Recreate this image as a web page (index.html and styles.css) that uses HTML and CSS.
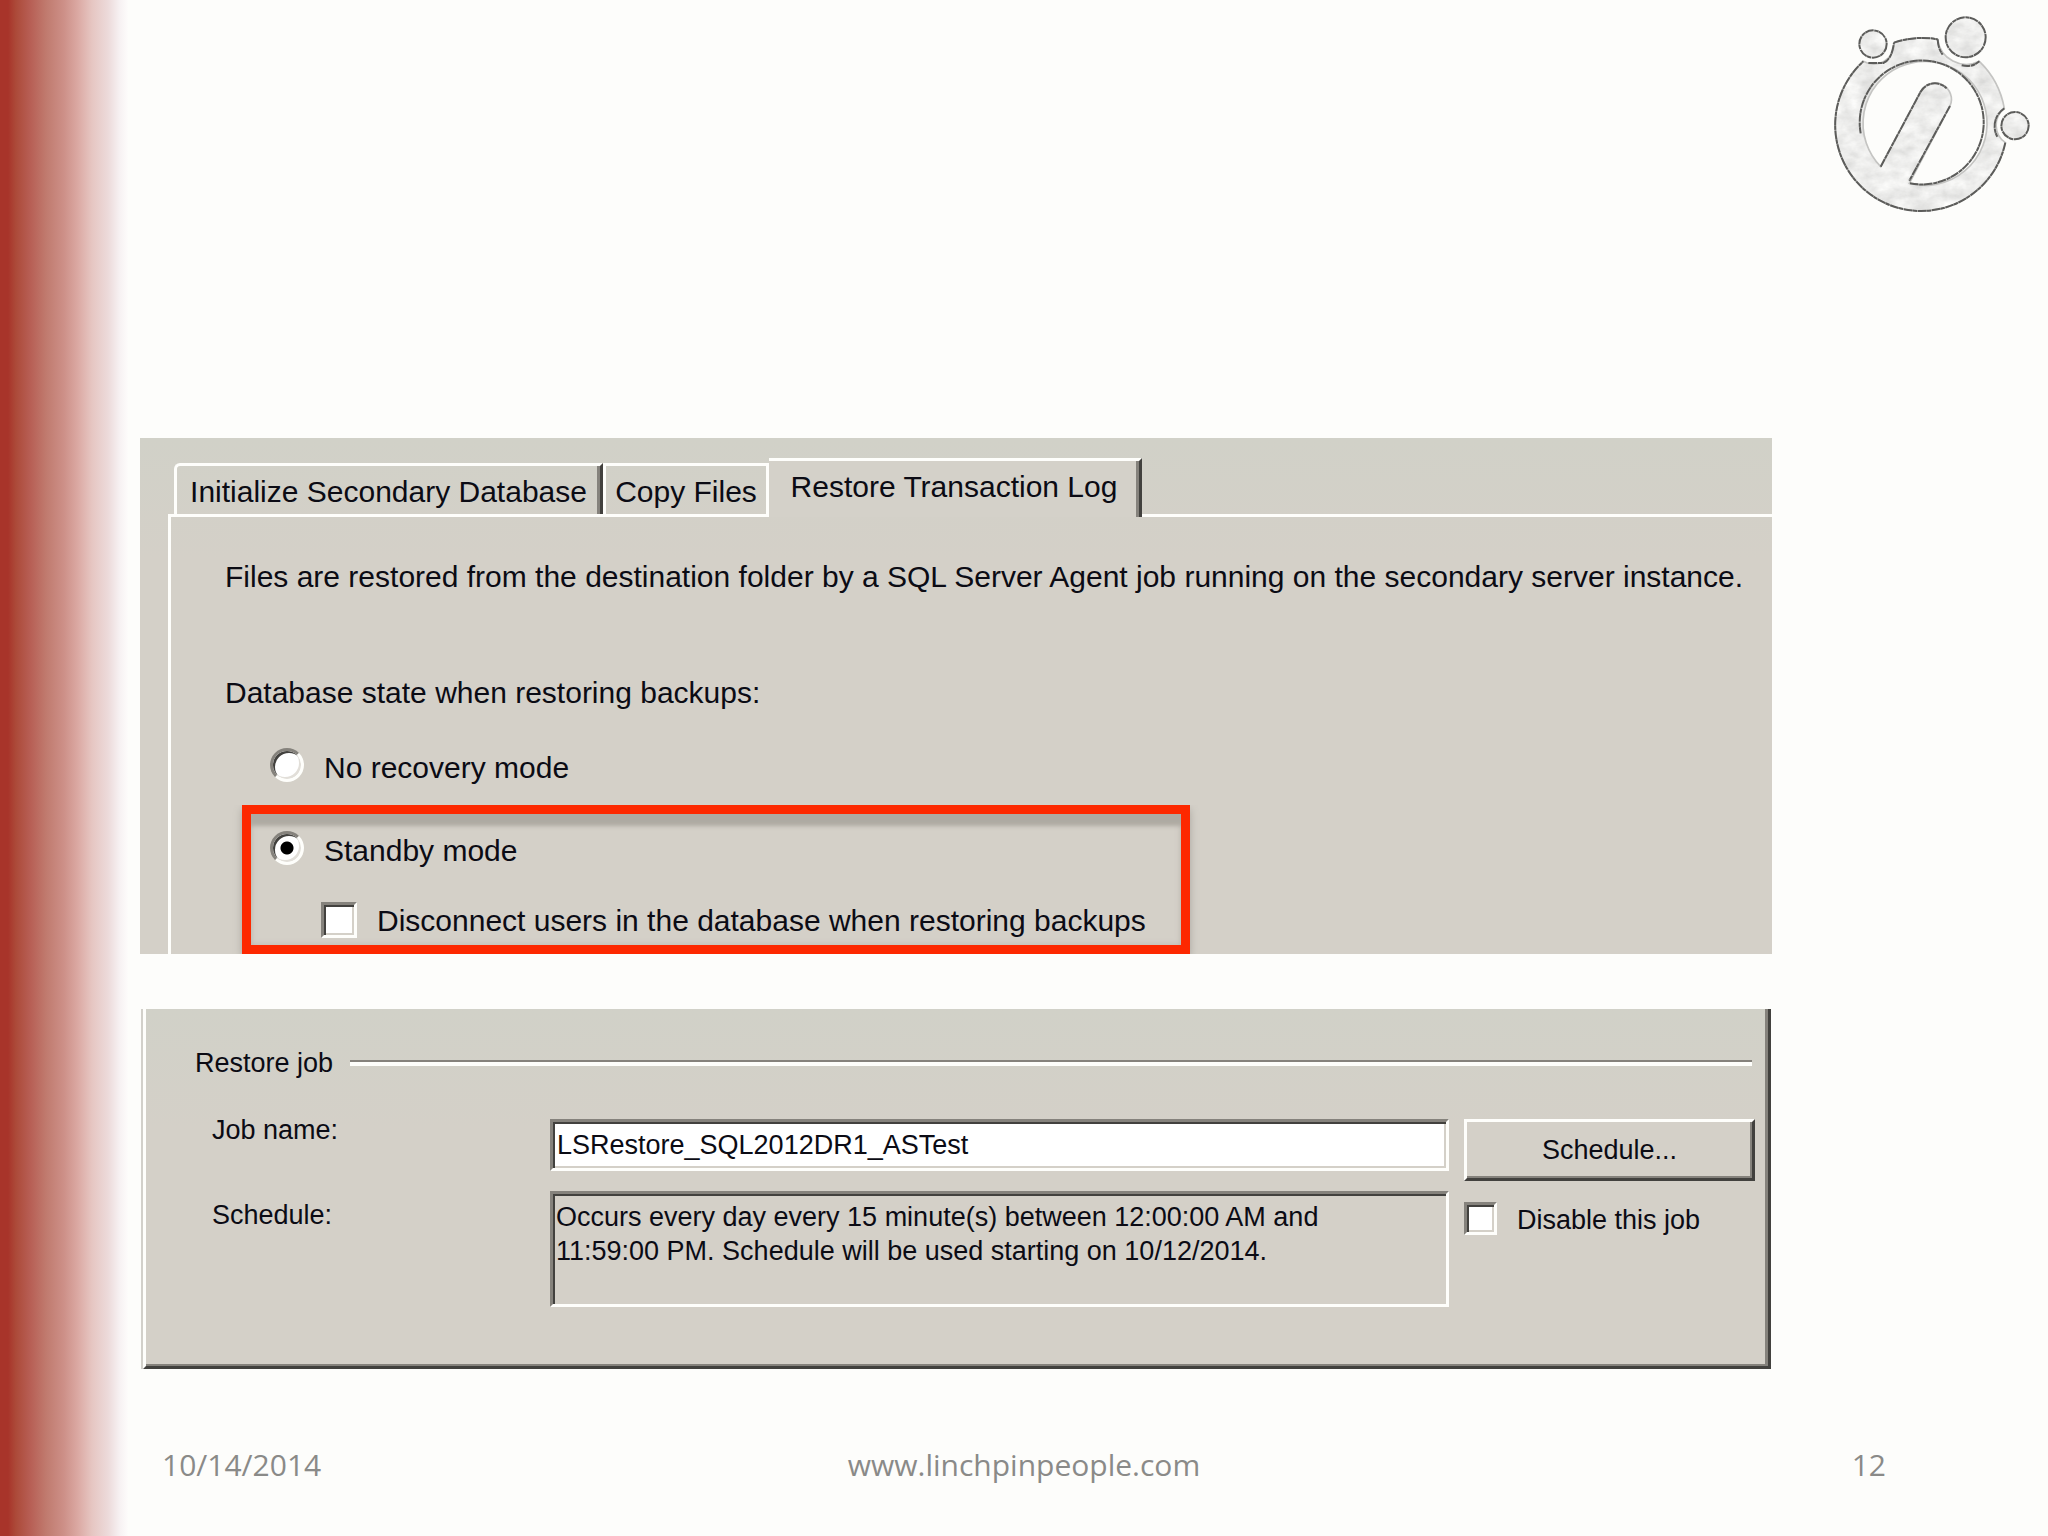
FILE: index.html
```html
<!DOCTYPE html>
<html lang="en">
<head>
<meta charset="utf-8">
<title>Restore Transaction Log</title>
<link rel="stylesheet" href="styles.css">
</head>
<body>
<div class="slide">
  <header class="slide-header">
    <svg class="logo" viewBox="0 0 714 690" role="img" aria-label="Linchpin People">
      <defs>
        <filter id="paper" x="0" y="0" width="100%" height="100%" color-interpolation-filters="sRGB">
          <feTurbulence type="fractalNoise" baseFrequency="0.02 0.03" numOctaves="4" seed="4" result="noise"/>
          <feColorMatrix in="noise" type="matrix" values="0.18 0 0 0 0.84  0.18 0 0 0 0.84  0.18 0 0 0 0.835  0 0 0 0 1"/>
          <feComposite in2="SourceGraphic" operator="in"/>
        </filter>
      </defs>
      <g filter="url(#paper)">
        <path fill-rule="evenodd" d="M252 128A258 258 0 0 1 383 118A87 87 0 0 0 508 184A258 258 0 0 1 583 325A64 64 0 0 0 586 428A258 258 0 1 1 160 184A61 61 0 0 0 252 128ZM212 500A186 186 0 1 1 298 550L420 318A49 49 0 0 0 332 275Z"/>
        <circle cx="189" cy="132" r="41"/><circle cx="467" cy="112" r="60"/><circle cx="615" cy="377" r="41"/>
      </g>
      <g class="logo-soft">
        <path d="M252 128A258 258 0 0 1 383 118A87 87 0 0 0 508 184A258 258 0 0 1 583 325A64 64 0 0 0 586 428A258 258 0 1 1 160 184A61 61 0 0 0 252 128Z"/>
        <path d="M212 500A186 186 0 1 1 298 550L420 318A49 49 0 0 0 332 275Z"/>
      </g>
      <g class="logo-ink">
        <path d="M252 128A258 258 0 0 1 383 118M383 118Q384 145 398 164M455 196Q485 204 508 184M583 325A64 64 0 0 0 562 410M586 428A258 258 0 1 1 160 184M175 189H220Q245 180 252 128"/>
        <path d="M212 500L332 275A49 49 0 0 1 410 265M420 318L298 542M300 550A186 186 0 1 0 152 400"/>
        <circle cx="189" cy="132" r="41"/><circle cx="467" cy="112" r="60"/><circle cx="615" cy="377" r="41"/>
      </g>
    </svg>
  </header>

  <main class="content">
    <section class="dialog">
      <div class="tabs" role="tablist">
        <button class="tab tab-first" role="tab" type="button">Initialize Secondary Database</button>
        <button class="tab tab-middle" role="tab" type="button">Copy Files</button>
        <button class="tab tab-active" role="tab" type="button" aria-selected="true">Restore Transaction Log</button>
      </div>
      <div class="tab-body" role="tabpanel">
        <p class="intro">Files are restored from the destination folder by a SQL Server Agent job running on the secondary server instance.</p>
        <p class="question">Database state when restoring backups:</p>
        <label class="option option-plain"><input class="radio" type="radio" name="state">No recovery mode</label>
        <div class="highlight">
          <label class="option"><input class="radio" type="radio" name="state" checked>Standby mode</label>
          <label class="option option-nested"><input class="check check-large" type="checkbox">Disconnect users in the database when restoring backups</label>
        </div>
      </div>
    </section>

    <section class="job">
      <h2 class="job-title">Restore job</h2>
      <div class="job-grid">
        <label class="job-label" for="job-name">Job name:</label>
        <input class="field name-field" id="job-name" type="text" value="LSRestore_SQL2012DR1_ASTest">
        <button class="schedule-button" type="button">Schedule...</button>
        <label class="job-label schedule-label" for="schedule">Schedule:</label>
        <textarea class="field schedule-field" id="schedule" readonly>Occurs every day every 15 minute(s) between 12:00:00 AM and
11:59:00 PM. Schedule will be used starting on 10/12/2014.</textarea>
        <label class="option disable-option"><input class="check" type="checkbox">Disable this job</label>
      </div>
    </section>
  </main>

  <footer class="slide-footer">
    <span>10/14/2014</span>
    <span>www.linchpinpeople.com</span>
    <span class="page-number">12</span>
  </footer>
</div>
</body>
</html>
```
FILE: styles.css
```css
:root {
  --face: #d4d0c8;
  --gray: #85827c;
  --dark: #42413e;
  --light: #fefefb;
  --ui: "Liberation Sans", Arial, sans-serif;
}

* { box-sizing: border-box; }

body { margin: 0; }

p, h2 { margin: 0; font-weight: normal; }

.slide {
  min-height: 100vh;
  display: flex;
  flex-direction: column;
  background:
    linear-gradient(to right, #a8342a 0, #a8342a 8px, #ac4a39 16px, #b75e54 30px, #c07a6e 46px, #cd9088 64px, #dba9a3 78px, #e6c6c2 92px, #ecdada 108px, #f7f2f3 120px, #fdfcfb 128px) left / 128px 100% no-repeat,
    #fdfdfb;
}

.slide-header {
  display: flex;
  justify-content: flex-end;
  height: 438px;
}

.logo { width: 238px; height: 230px; }
.logo-soft { fill: none; stroke: #c4c4c2; stroke-width: 5; }
.logo-ink { fill: none; stroke: #5c5c5a; stroke-width: 6; stroke-dasharray: 26 2 13 1; }

.content {
  display: flex;
  flex-direction: column;
  gap: 55px;
  padding: 0 276px 0 140px;
  font: 30px/40px var(--ui);
  color: #0b0b14;
}

.dialog {
  padding: 20px 0 0 28px;
  background: linear-gradient(#d1d1c8 0, var(--face) 120px);
}

.tabs {
  display: flex;
  align-items: flex-end;
  padding-left: 6px;
}

.tab {
  height: 51px;
  padding: 4px 0 0;
  border: 3px solid var(--light);
  border-bottom: 0;
  background: transparent;
  font: inherit;
  color: inherit;
  white-space: nowrap;
}

.tab-first {
  width: 429px;
  border-right-color: var(--dark);
  border-top-left-radius: 6px;
  box-shadow: inset -3px 0 0 var(--gray);
}

.tab-middle { width: 166px; }

.tab-active {
  position: relative;
  width: 373px;
  height: 59px;
  margin-bottom: -3px;
  padding: 0 0 4px;
  border-left: 0;
  border-right-color: var(--dark);
  background: #d4d1c9;
  box-shadow: inset -3px 0 0 var(--gray);
}

.tab-body {
  padding: 40px 0 0 54px;
  border: solid var(--light);
  border-width: 3px 0 0 3px;
}

.intro { white-space: nowrap; }
.question { margin-top: 76px; }

.option {
  display: flex;
  align-items: center;
  gap: 20px;
  white-space: nowrap;
}

.option-plain { margin: 35px 0 17px 45px; }

.highlight {
  width: max-content;
  margin-left: 17px;
  padding: 17px 35px 4px 19px;
  border: 9px solid #fd2800;
  box-shadow: inset 0 14px 4px -2px #aeaaa2, inset 0 0 6px #bcb8b0, 0 4px 8px #aaa69f;
  clip-path: inset(0 -12px 0 -12px);
}

.option-nested { margin: 30px 0 0 51px; }

.radio {
  appearance: none;
  width: 34px;
  height: 34px;
  margin: 0 0 6px;
  border: 3px solid;
  border-color: var(--gray) var(--light) var(--light) var(--gray);
  border-radius: 50%;
  background: #fff;
  box-shadow: inset 2px 2px 0 var(--dark), inset -2px -2px 0 #e2dfd9;
}

.radio:checked { background: radial-gradient(circle, #000 0 6px, #fff 7px); }

.check {
  appearance: none;
  width: 33px;
  height: 33px;
  margin: 0 0 3px;
  border: 3px solid;
  border-color: var(--gray) var(--light) var(--light) var(--gray);
  background: #fff;
  box-shadow: inset 2px 2px 0 var(--dark), inset -2px -2px 0 var(--face);
}

.check-large { width: 36px; height: 36px; }

.job {
  margin: 0 1px 0 3px;
  padding: 36px 13px 59px 0;
  border: 3px solid var(--dark);
  border-top: 0;
  border-left-color: var(--light);
  background: linear-gradient(#d1d1c8 0, var(--face) 120px);
  box-shadow: -2px 0 0 #d2d0ca, inset -3px -2px 0 var(--gray);
  font-size: 27px;
  line-height: 36px;
}

.job-title {
  display: flex;
  align-items: center;
  gap: 17px;
  padding: 0 3px 0 49px;
  font-size: 27px;
}

.job-title::after {
  content: "";
  flex: 1;
  height: 4px;
  border-top: 2px solid var(--gray);
  background: var(--light);
}

.job-grid {
  display: grid;
  grid-template-columns: 323px 1fr 291px;
  column-gap: 15px;
  row-gap: 10px;
  align-items: start;
  margin-top: 30px;
  padding-left: 66px;
}

.job-label { padding-top: 1px; }
.schedule-label { padding-top: 6px; }

.field {
  width: 100%;
  margin: 0;
  border: 3px solid;
  border-color: var(--gray) var(--light) var(--light) var(--gray);
  border-radius: 0;
  font: 27px/34px var(--ui);
  color: inherit;
  outline: 0;
}

.name-field {
  height: 52px;
  margin-top: 8px;
  padding: 0 4px;
  background: #fff;
  box-shadow: inset 2px 2px 0 var(--dark), inset -2px -2px 0 var(--face);
}

.schedule-field {
  height: 116px;
  padding: 6px 3px;
  background: var(--face);
  box-shadow: inset 2px 2px 0 var(--dark);
  resize: none;
  overflow: hidden;
}

.schedule-button {
  height: 62px;
  margin-top: 8px;
  padding: 0;
  border: 3px solid;
  border-color: var(--light) var(--dark) var(--dark) var(--light);
  background: var(--face);
  box-shadow: inset -2px -2px 0 var(--gray);
  font: inherit;
  color: inherit;
}

.disable-option { padding-top: 11px; }

.slide-footer {
  display: grid;
  grid-template-columns: 1fr auto 1fr;
  margin-top: auto;
  padding: 0 162px 51px;
  font: 30px/40px "Open Sans", "Noto Sans", sans-serif;
  color: #8a8a88;
}

.page-number { text-align: right; }
```
